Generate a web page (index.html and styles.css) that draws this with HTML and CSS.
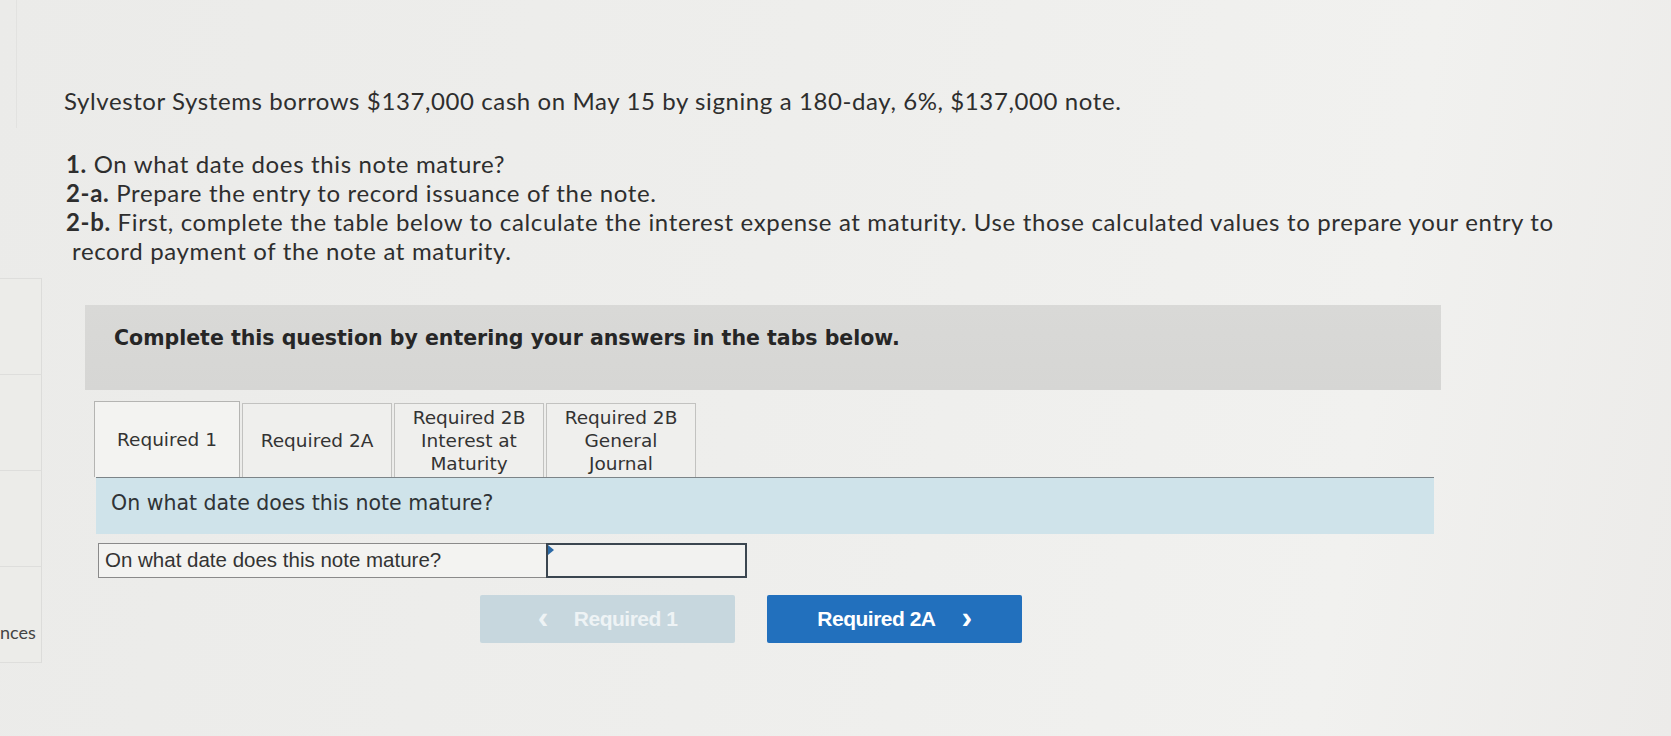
FILE: index.html
```html
<!DOCTYPE html>
<html>
<head>
<meta charset="utf-8">
<link rel="stylesheet" href="styles.css">
</head>
<body>
<div class="page">
  <aside class="sidebar">
    <div class="side-top"></div>
    <div class="side-cells">
      <div class="side-cell"></div>
      <div class="side-cell"></div>
      <div class="side-cell"></div>
      <div class="side-cell last"><span class="side-label">nces</span></div>
    </div>
  </aside>
  <main class="main">
    <p class="intro">Sylvestor Systems borrows $137,000 cash on May 15 by signing a 180-day, 6%, $137,000 note.</p>
    <div class="reqs">
      <p class="req"><b>1.</b> On what date does this note mature?</p>
      <p class="req"><b>2-a.</b> Prepare the entry to record issuance of the note.</p>
      <p class="req"><b>2-b.</b> First, complete the table below to calculate the interest expense at maturity. Use those calculated values to prepare your entry to<br><span class="cont">record payment of the note at maturity.</span></p>
    </div>
    <div class="banner">Complete this question by entering your answers in the tabs below.</div>
    <div class="tabs">
      <div class="tab active">Required 1</div>
      <div class="tab">Required 2A</div>
      <div class="tab">Required 2B<br>Interest at<br>Maturity</div>
      <div class="tab">Required 2B<br>General<br>Journal</div>
    </div>
    <div class="prompt">On what date does this note mature?</div>
    <div class="answer-row">
      <div class="answer-label">On what date does this note mature?</div>
      <div class="answer-input"><span class="corner"></span></div>
    </div>
    <div class="nav">
      <button class="btn prev"><span class="chev">&lsaquo;</span>Required 1</button>
      <button class="btn next">Required 2A<span class="chev">&rsaquo;</span></button>
    </div>
  </main>
</div>
</body>
</html>
```

FILE: styles.css
```css
html, body {
  margin: 0;
  padding: 0;
}
body {
  width: 1671px;
  height: 736px;
  overflow: hidden;
  background: linear-gradient(100deg, #ebebe9 0%, #eeeeec 45%, #f1f1ef 80%, #ecebe9 100%);
  font-family: "Lato", "Liberation Sans", sans-serif;
  color: #2e2e2e;
}
.page {
  display: flex;
  height: 736px;
}
.sidebar {
  width: 42px;
  flex: none;
  display: flex;
  flex-direction: column;
}
.side-top {
  height: 128px;
  width: 16px;
  border-right: 1px solid #e2e2e0;
}
.side-cells {
  margin-top: 150px;
  display: flex;
  flex-direction: column;
}
.side-cell {
  height: 95px;
  border-top: 1px solid #dededc;
  border-right: 1px solid #dcdcda;
  background: #ecece9;
}
.side-cell.last {
  height: 95px;
  border-bottom: 1px solid #dededc;
  position: relative;
}
.side-label {
  position: absolute;
  left: 0;
  top: 54px;
  font-family: "Lato", sans-serif;
  font-size: 18px;
  color: #444;
}
.main {
  flex: 1;
  padding-left: 22px;
  padding-top: 86px;
}
.intro {
  margin: 0;
  font-size: 24px;
  line-height: 30px;
  letter-spacing: 0.6px;
}
.reqs {
  margin-top: 33px;
  padding-left: 2px;
}
.req {
  margin: 0;
  font-size: 24px;
  line-height: 29px;
  letter-spacing: 0.65px;
  white-space: nowrap;
}
.req b {
  font-weight: 700;
}
.cont {
  padding-left: 6px;
}
.banner {
  margin-top: 40px;
  margin-left: 21px;
  width: 1356px;
  height: 85px;
  box-sizing: border-box;
  padding: 21px 0 0 29px;
  background: linear-gradient(180deg, #d9d9d7 0%, #d6d6d4 100%);
  font-family: "DejaVu Sans", "Verdana", sans-serif;
  font-weight: bold;
  font-size: 20.5px;
  color: #262626;
}
.tabs {
  margin-top: 11px;
  margin-left: 30px;
  display: flex;
  align-items: flex-end;
  height: 76px;
}
.tab {
  box-sizing: border-box;
  height: 74px;
  width: 150px;
  border: 1px solid #c2c2c0;
  border-bottom: none;
  background: #efefed;
  margin-right: 2px;
  display: flex;
  align-items: center;
  justify-content: center;
  text-align: center;
  font-family: "DejaVu Sans", "Verdana", sans-serif;
  font-size: 18.5px;
  line-height: 23px;
  color: #333;
}
.tab.active {
  height: 76px;
  width: 146px;
  background: #f3f3f1;
  border-color: #b4b4b2;
}
.prompt {
  margin-left: 32px;
  width: 1338px;
  height: 57px;
  box-sizing: border-box;
  border-top: 1px solid #7c8488;
  background: #cfe3ea;
  padding: 13px 0 0 15px;
  font-family: "DejaVu Sans", "Verdana", sans-serif;
  font-size: 20.5px;
  color: #2f3336;
}
.answer-row {
  margin-top: 9px;
  margin-left: 34px;
  display: flex;
  height: 35px;
}
.answer-label {
  box-sizing: border-box;
  width: 448px;
  height: 35px;
  border: 1px solid #8a8a8a;
  border-right: none;
  background: #f3f3f1;
  padding: 4px 0 0 6px;
  font-family: "Liberation Sans", Arial, sans-serif;
  font-size: 20.5px;
  color: #333;
}
.answer-input {
  box-sizing: border-box;
  width: 201px;
  height: 35px;
  border: 2px solid #3b4650;
  background: #f2f2f0;
  position: relative;
}
.corner {
  position: absolute;
  left: 0;
  top: 0;
  width: 0;
  height: 0;
  border-top: 5px solid transparent;
  border-bottom: 5px solid transparent;
  border-left: 6px solid #2c6aa6;
}
.nav {
  margin-top: 17px;
  margin-left: 416px;
  display: flex;
  gap: 32px;
}
.btn {
  width: 255px;
  height: 48px;
  border: none;
  border-radius: 2px;
  font-family: "Liberation Sans", Arial, sans-serif;
  font-weight: bold;
  font-size: 21px;
  letter-spacing: -0.5px;
  color: #fff;
  display: flex;
  align-items: center;
  justify-content: center;
  padding: 0;
}
.btn.prev {
  background: #c7d7de;
  color: #eef3f5;
}
.btn.next {
  background: #2270bd;
}
.chev {
  font-size: 32px;
  font-weight: bold;
  line-height: 1;
  position: relative;
  top: -2px;
}
.prev .chev {
  margin-right: 26px;
}
.next .chev {
  margin-left: 26px;
}
```
